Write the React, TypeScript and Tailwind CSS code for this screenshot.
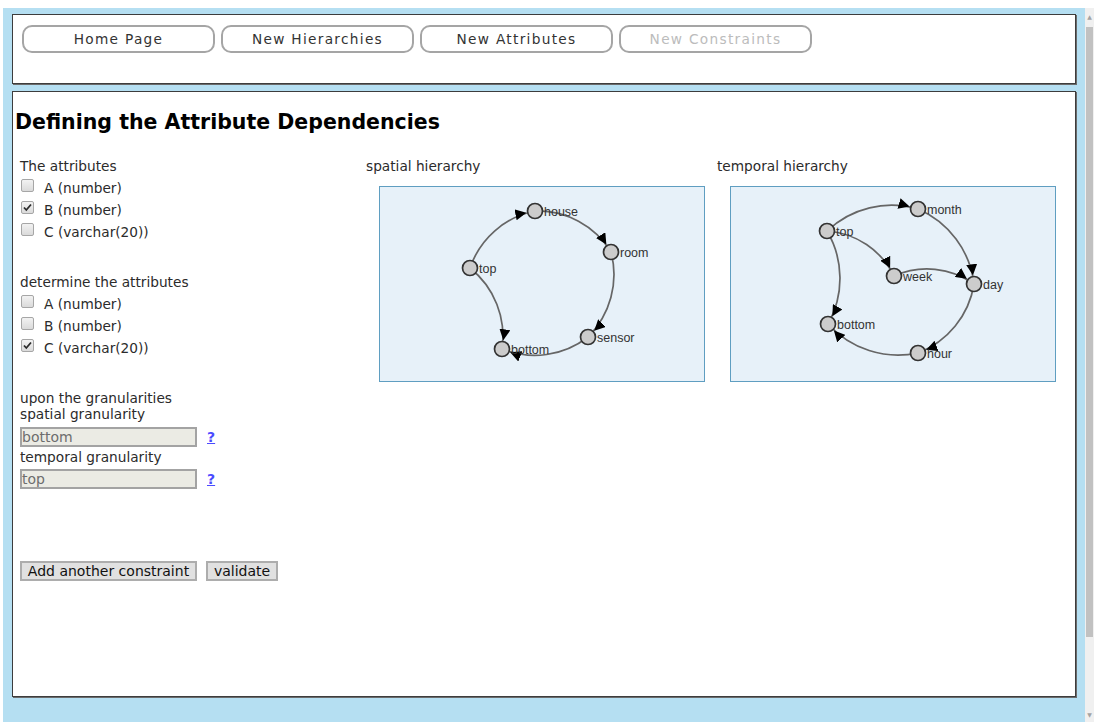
import React from 'react';

type GraphNode = { id: string; x: number; y: number };
type GraphLink = [string, string];

const spatialNodes: GraphNode[] = [
  { id: 'house', x: 155, y: 24 },
  { id: 'room', x: 231, y: 65 },
  { id: 'top', x: 90, y: 81 },
  { id: 'sensor', x: 208, y: 150 },
  { id: 'bottom', x: 122, y: 162 },
];

const spatialLinks: GraphLink[] = [
  ['top', 'house'],
  ['house', 'room'],
  ['room', 'sensor'],
  ['sensor', 'bottom'],
  ['top', 'bottom'],
];

const temporalNodes: GraphNode[] = [
  { id: 'month', x: 187, y: 22 },
  { id: 'top', x: 96, y: 44 },
  { id: 'week', x: 163, y: 89 },
  { id: 'day', x: 243, y: 97 },
  { id: 'bottom', x: 97, y: 137 },
  { id: 'hour', x: 187, y: 166 },
];

const temporalLinks: GraphLink[] = [
  ['top', 'month'],
  ['month', 'day'],
  ['top', 'week'],
  ['week', 'day'],
  ['day', 'hour'],
  ['hour', 'bottom'],
  ['top', 'bottom'],
];

const navItems = [
  { label: 'Home Page', disabled: false },
  { label: 'New Hierarchies', disabled: false },
  { label: 'New Attributes', disabled: false },
  { label: 'New Constraints', disabled: true },
];

const attributes = ['A (number)', 'B (number)', 'C (varchar(20))'];

// d3-style force graph: curved links with arrowheads, grey nodes with labels
function HierarchyGraph({ name, nodes, links }: { name: string; nodes: GraphNode[]; links: GraphLink[] }) {
  const pos = Object.fromEntries(nodes.map((n) => [n.id, n]));
  const markerId = `arrow-${name}`;
  return (
    <svg width="324" height="194" className="block">
      <defs>
        <marker
          id={markerId}
          viewBox="0 -5 10 10"
          refX="18"
          refY="0"
          markerWidth="11"
          markerHeight="11"
          markerUnits="userSpaceOnUse"
          orient="auto"
        >
          <path d="M0,-5L10,0L0,5" fill="#000" />
        </marker>
      </defs>
      {links.map(([s, t]) => {
        const a = pos[s];
        const b = pos[t];
        const dr = Math.hypot(b.x - a.x, b.y - a.y);
        return (
          <path
            key={`${s}-${t}`}
            d={`M${a.x},${a.y}A${dr},${dr} 0 0,1 ${b.x},${b.y}`}
            fill="none"
            stroke="#666"
            strokeWidth="1.7"
            markerEnd={`url(#${markerId})`}
          />
        );
      })}
      {nodes.map((n) => (
        <g key={n.id}>
          <circle cx={n.x} cy={n.y} r="7.5" fill="#ccc" stroke="#333" strokeWidth="1.7" />
          <text
            x={n.x + 9}
            y={n.y + 4.5}
            fontSize="12.5"
            fill="#333"
            fontFamily="'Liberation Sans', Arial, sans-serif"
          >
            {n.id}
          </text>
        </g>
      ))}
    </svg>
  );
}

function Checkbox({ checked }: { checked?: boolean }) {
  return (
    <span className="mt-[1px] flex h-[13px] w-[13px] shrink-0 items-center justify-center rounded-[2px] border border-[#a6a6a6] bg-[linear-gradient(#f2f2f2,#dadada)]">
      {checked && (
        <svg width="11" height="11" viewBox="0 0 11 11">
          <path d="M2 5.5 L4.3 8 L9 2.5" fill="none" stroke="#2b2b2b" strokeWidth="1.8" />
        </svg>
      )}
    </span>
  );
}

function CheckList({ checkedIndex }: { checkedIndex: number }) {
  return (
    <div className="mt-[3px] flex flex-col">
      {attributes.map((attr, i) => (
        <label key={attr} className="flex h-[22px] items-start">
          <span className="ml-[1px] mt-[1px]">
            <Checkbox checked={i === checkedIndex} />
          </span>
          <span className="ml-[10px] leading-[22px]">{attr}</span>
        </label>
      ))}
    </div>
  );
}

function GranularityField({ value }: { value: string }) {
  return (
    <div className="flex items-center">
      <div className="flex h-[20px] w-[177px] items-center border-2 border-[#a3a3a3] bg-[#ebebe4] text-[14px] leading-none text-[#6d6d6d]">
        {value}
      </div>
      <a className="ml-[10px] text-[14px] font-bold text-[#4b4bff] underline">?</a>
    </div>
  );
}

export default function App() {
  return (
    <div className="flex h-[722px] w-[1094px] overflow-hidden bg-white font-['DejaVu_Sans',Verdana,sans-serif] text-[13.7px] text-[#2b2b2b]">
      <div className="flex flex-1 flex-col pl-[3px] pt-[8px]">
        <div className="flex flex-1 flex-col gap-[7px] bg-[#b5dff2] px-[9px] pt-[6px]">
          {/* navigation bar */}
          <div className="flex h-[70px] gap-[6px] border border-[#3d3d3d] bg-white pl-[9px] pt-[10px] shadow-[1px_1px_0_#6b6b6b]">
            {navItems.map((item) => (
              <button
                key={item.label}
                className={`flex h-[28px] w-[193px] items-center justify-center rounded-[10px] border-2 border-[#a5a5a5] bg-white tracking-[1.3px] ${
                  item.disabled ? 'text-[#bcbcbc]' : 'text-[#333]'
                }`}
              >
                {item.label}
              </button>
            ))}
          </div>

          {/* constraint editor */}
          <div className="flex h-[606px] flex-col border border-[#3d3d3d] bg-white pl-[2px] shadow-[1px_1px_0_#6b6b6b]">
            <h1 className="mt-[18px] text-[20.5px] font-bold leading-[24px] text-black">
              Defining the Attribute Dependencies
            </h1>

            <div className="ml-[5px] mt-[24px] flex">
              <div className="flex w-[346px] flex-col leading-[16px]">
                <div>The attributes</div>
                <CheckList checkedIndex={1} />

                <div className="mt-[31px]">determine the attributes</div>
                <CheckList checkedIndex={2} />

                <div className="mt-[31px]">upon the granularities</div>
                <div>spatial granularity</div>
                <div className="mt-[5px]">
                  <GranularityField value="bottom" />
                </div>
                <div className="mt-[2px]">temporal granularity</div>
                <div className="mt-[4px]">
                  <GranularityField value="top" />
                </div>

                <div className="mt-[72px] flex gap-[9px]">
                  <button className="h-[20px] w-[177px] border-2 border-[#adadad] bg-[#e1e1e1] text-[14px] leading-none text-[#111]">
                    Add another constraint
                  </button>
                  <button className="h-[20px] w-[72px] border-2 border-[#adadad] bg-[#e1e1e1] text-[14px] leading-none text-[#111]">
                    validate
                  </button>
                </div>
              </div>

              <div className="flex w-[351px] flex-col">
                <div className="leading-[16px]">spatial hierarchy</div>
                <div className="ml-[13px] mt-[12px] w-[326px] border border-[#5f9ec1] bg-[#e7f1f9]">
                  <HierarchyGraph name="spatial" nodes={spatialNodes} links={spatialLinks} />
                </div>
              </div>

              <div className="flex flex-col">
                <div className="leading-[16px]">temporal hierarchy</div>
                <div className="ml-[13px] mt-[12px] w-[326px] border border-[#5f9ec1] bg-[#e7f1f9]">
                  <HierarchyGraph name="temporal" nodes={temporalNodes} links={temporalLinks} />
                </div>
              </div>
            </div>
          </div>
        </div>
      </div>

      {/* window scrollbar */}
      <div className="flex w-[9px] flex-col bg-white pt-[8px]">
        <div className="flex flex-1 flex-col bg-[#f0f0f0]">
          <div className="flex h-[19px] items-start justify-center pt-[6px] text-[6px] leading-none text-[#a3a3a3]">▲</div>
          <div className="ml-[1px] h-[610px] w-[7px] bg-[#c1c1c1]" />
          <div className="flex-1" />
          <div className="flex h-[14px] items-center justify-center text-[6px] leading-none text-[#a3a3a3]">▼</div>
        </div>
      </div>
    </div>
  );
}
